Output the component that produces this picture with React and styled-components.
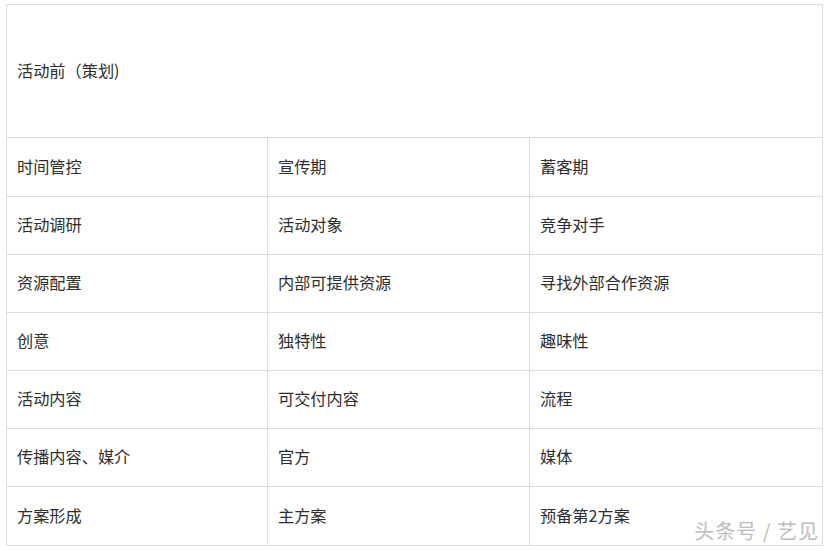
import React from "react";
import styled, { createGlobalStyle } from "styled-components";

const Global = createGlobalStyle`
  html, body { margin: 0; padding: 0; background: #fff; }
  body { font-family: "Microsoft YaHei", "Noto Sans CJK SC", sans-serif; }
`;

const Page = styled.div`
  position: relative;
  width: 830px;
  height: 551px;
  padding: 4px 0 0 6px;
  box-sizing: border-box;
`;

const Grid = styled.div`
  display: grid;
  width: 817px;
  grid-template-columns: 260px 261px 292px;
  grid-template-rows: 132px 58px 57px 57px 57px 57px 57px 58px;
  gap: 1px;
  padding: 1px;
  box-sizing: border-box;
  background: #dcdcdc;
`;

const Cell = styled.div`
  grid-column: ${(p) => (p.$span ? "1 / -1" : "auto")};
  background: #fff;
  display: flex;
  align-items: center;
  padding: 0 0 2px 10px;
  font-size: 16.2px;
  color: #2e2e2e;
  line-height: 1;
`;

const Watermark = styled.div`
  position: absolute;
  right: 11px;
  bottom: 6px;
  font-size: 20px;
  color: #bdbdbd;
  letter-spacing: 1px;
  text-shadow: 1px 1px 0 #fff, -1px -1px 0 #fff, 1px -1px 0 #fff, -1px 1px 0 #fff;
  font-family: "Noto Sans CJK SC", sans-serif;
`;

const rows = [
  ["时间管控", "宣传期", "蓄客期"],
  ["活动调研", "活动对象", "竞争对手"],
  ["资源配置", "内部可提供资源", "寻找外部合作资源"],
  ["创意", "独特性", "趣味性"],
  ["活动内容", "可交付内容", "流程"],
  ["传播内容、媒介", "官方", "媒体"],
  ["方案形成", "主方案", "预备第2方案"],
];

export default function App() {
  return (
    <Page>
      <Global />
      <Grid>
        <Cell $span>活动前（策划)</Cell>
        {rows.map((r, i) =>
          r.map((t, j) => <Cell key={`${i}-${j}`}>{t}</Cell>)
        )}
      </Grid>
      <Watermark>头条号 / 艺见</Watermark>
    </Page>
  );
}
